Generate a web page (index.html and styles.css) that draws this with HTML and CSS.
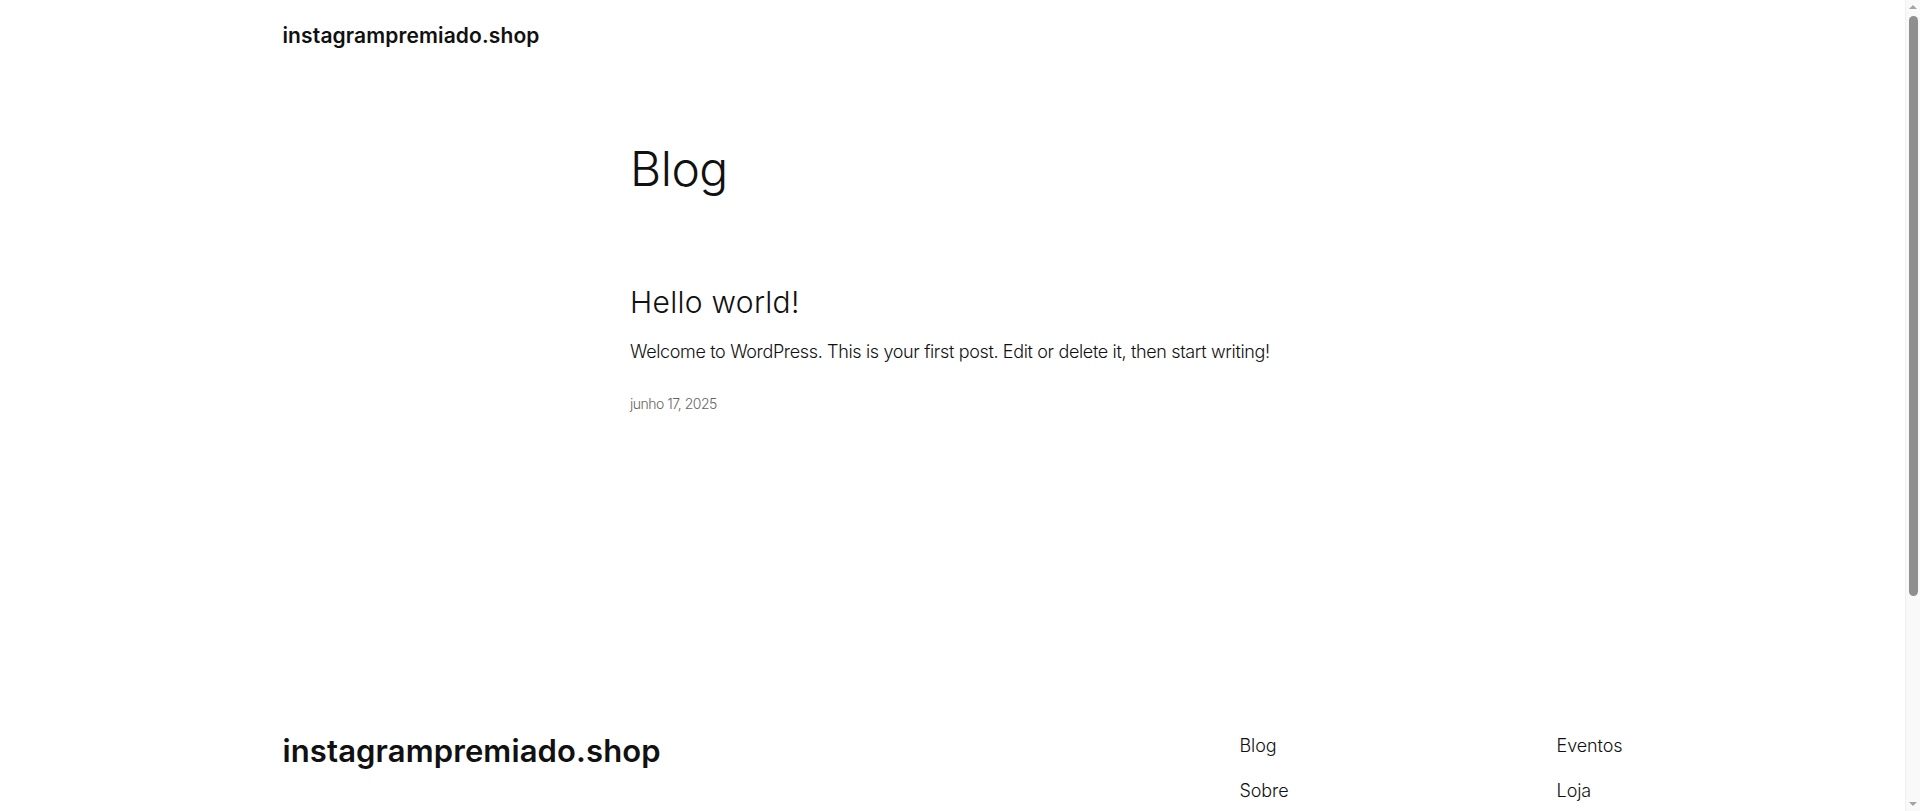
FILE: index.html
```html
<!DOCTYPE html>
<html lang="pt-BR">
<head>
<meta charset="utf-8">
<title>Blog – instagrampremiado.shop</title>
<link rel="stylesheet" href="styles.css">
</head>
<body>
<div class="page">
  <header class="site-header">
    <div class="wide">
      <a class="site-title" href="#">instagrampremiado.shop</a>
    </div>
  </header>
  <main class="site-main">
    <div class="content">
      <h1 class="page-title">Blog</h1>
      <article class="post">
        <h2 class="post-title"><a href="#">Hello world!</a></h2>
        <p class="post-excerpt">Welcome to WordPress. This is your first post. Edit or delete it, then start writing!</p>
        <time class="post-date">junho 17, 2025</time>
      </article>
    </div>
  </main>
  <footer class="site-footer">
    <div class="wide footer-row">
      <a class="footer-title" href="#">instagrampremiado.shop</a>
      <nav class="footer-nav">
        <ul class="nav-col">
          <li><a href="#">Blog</a></li>
          <li><a href="#">Sobre</a></li>
        </ul>
        <ul class="nav-col">
          <li><a href="#">Eventos</a></li>
          <li><a href="#">Loja</a></li>
        </ul>
      </nav>
    </div>
  </footer>
</div>
<div class="scrollbar" aria-hidden="true">
  <span class="sb-arrow sb-up"></span>
  <span class="sb-thumb"></span>
  <span class="sb-arrow sb-down"></span>
</div>
</body>
</html>
```
FILE: styles.css
```css
html, body {
  margin: 0;
  padding: 0;
  background: #ffffff;
}
body {
  font-family: Inter, "Noto Sans", "Liberation Sans", sans-serif;
  color: #111111;
  font-weight: 300;
}
a {
  color: inherit;
  text-decoration: none;
}
.page {
  margin-right: 15px;
}
.wide {
  width: 1340px;
  margin: 0 auto;
}
.site-header {
  padding: 22px 0 22px;
}
.site-title {
  display: block;
  font-size: 21px;
  line-height: 28px;
  font-weight: 600;
  letter-spacing: 0.12px;
}
.site-main {
  padding-top: 68px;
}
.content {
  width: 645px;
  margin: 0 auto;
}
.page-title {
  margin: 0;
  font-size: 48px;
  line-height: 57.6px;
  font-weight: 300;
  letter-spacing: -0.5px;
}
.post {
  margin-top: 86px;
  display: flex;
  flex-direction: column;
}
.post-title {
  margin: 0;
  font-size: 30px;
  line-height: 36px;
  font-weight: 300;
  letter-spacing: 0.3px;
}
.post-excerpt {
  margin: 18px 0 0;
  font-size: 18px;
  line-height: 28.8px;
  letter-spacing: -0.35px;
}
.post-date {
  margin-top: 28px;
  font-size: 14px;
  line-height: 19.6px;
  color: #666666;
  letter-spacing: -0.5px;
}
.site-footer {
  margin-top: 318px;
  padding-bottom: 272px;
}
.footer-row {
  display: flex;
  justify-content: space-between;
  align-items: flex-start;
}
.footer-title {
  margin-top: 1px;
  font-size: 31px;
  line-height: 36px;
  font-weight: 600;
  letter-spacing: 0.12px;
}
.footer-nav {
  width: 383px;
  display: flex;
  justify-content: space-between;
}
.nav-col {
  list-style: none;
  margin: 0;
  padding: 0;
  display: flex;
  flex-direction: column;
  gap: 16px;
}
.nav-col li {
  font-size: 18px;
  line-height: 28.8px;
  letter-spacing: -0.1px;
}
.scrollbar {
  position: fixed;
  top: 0;
  right: 0;
  width: 15px;
  height: 100vh;
  background: #f9f9f9;
  border-left: 1px solid #f0f0f0;
  box-sizing: border-box;
}
.sb-thumb {
  position: absolute;
  top: 16px;
  left: 3px;
  width: 9px;
  height: 580px;
  border-radius: 5px;
  background: #8f8f8f;
}
.sb-arrow {
  position: absolute;
  left: 3px;
  width: 0;
  height: 0;
  border-left: 4px solid transparent;
  border-right: 4px solid transparent;
}
.sb-up {
  top: 5px;
  border-bottom: 4px solid #a3a3a3;
}
.sb-down {
  bottom: 5px;
  border-top: 4px solid #a3a3a3;
}
```
